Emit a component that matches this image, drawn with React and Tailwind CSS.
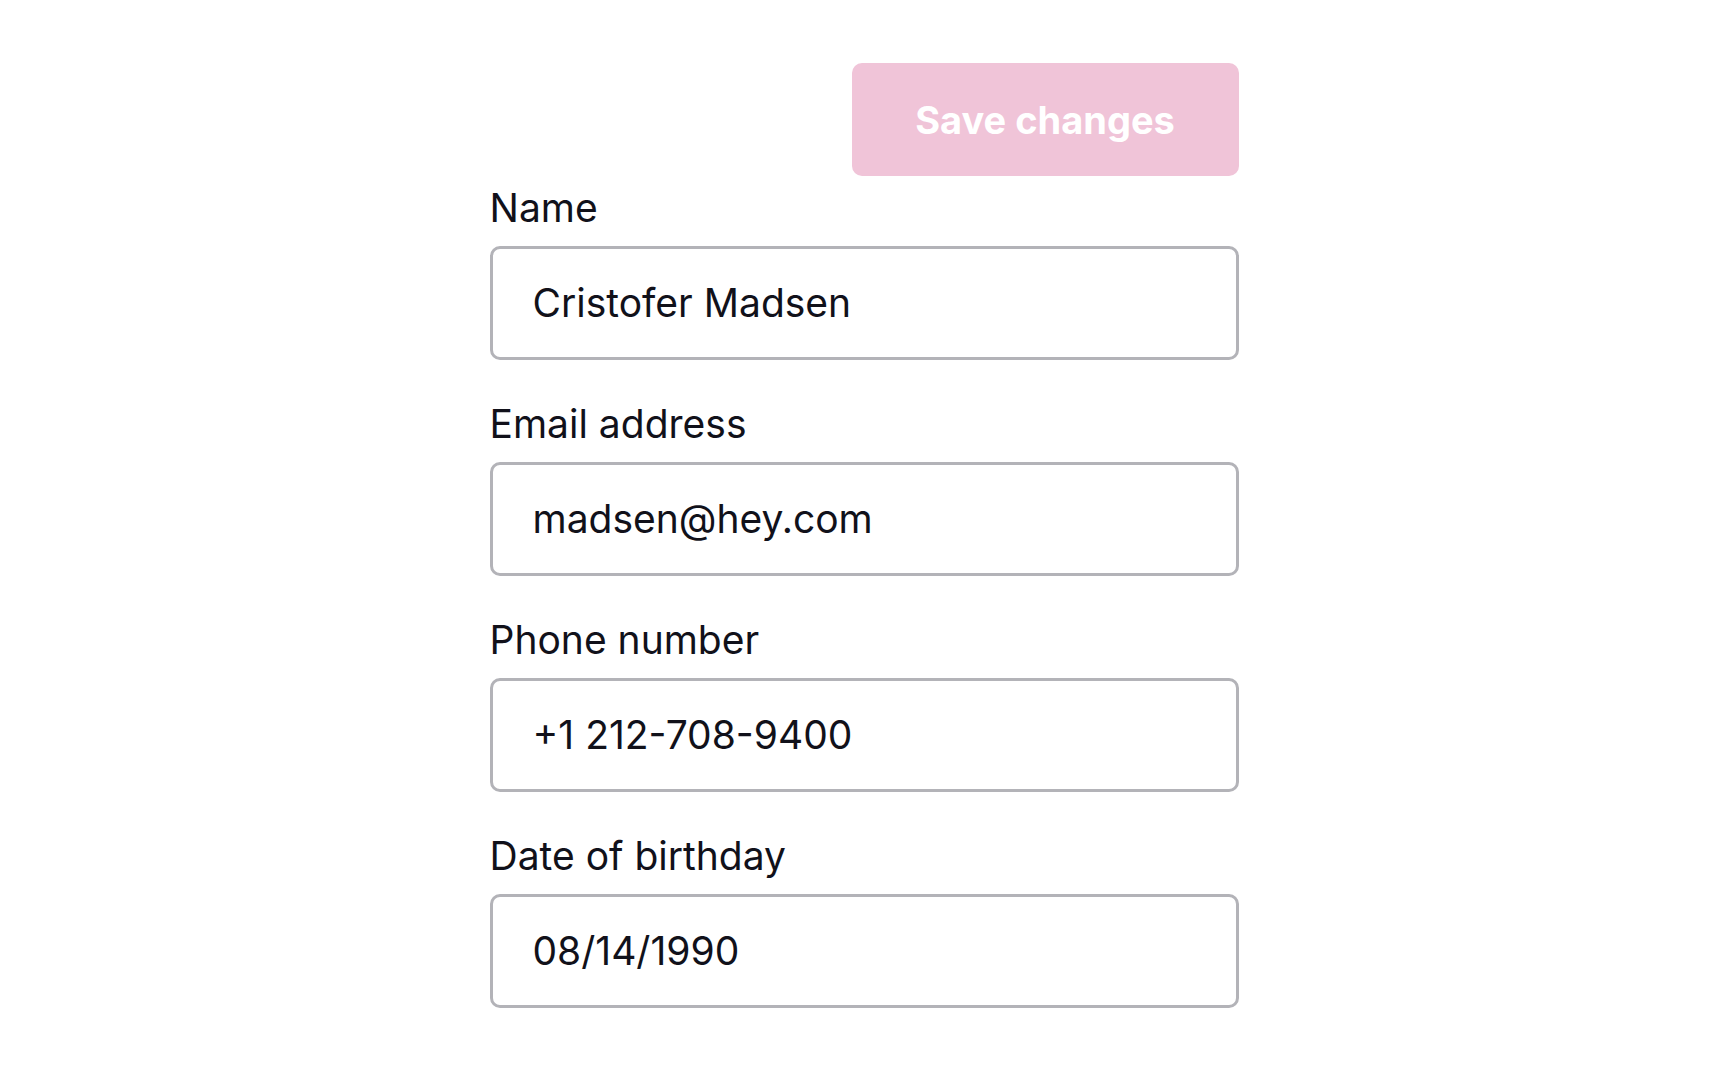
const fields = [
  { label: "Name", value: "Cristofer Madsen" },
  { label: "Email address", value: "madsen@hey.com" },
  { label: "Phone number", value: "+1 212-708-9400" },
  { label: "Date of birthday", value: "08/14/1990" },
];

function App() {
  return (
    <div className="min-h-screen bg-white font-['Inter',sans-serif] text-[#11111a]">
      <div className="w-[749px] mx-auto pt-[63px] flex flex-col">
        <button
          type="button"
          className="self-end w-[387px] h-[113px] pt-[2px] rounded-[10px] bg-[#f0c4d8] text-white text-[38px] font-bold"
        >
          Save changes
        </button>

        {fields.map((field, i) => (
          <div key={field.label} className={i === 0 ? "mt-[8px]" : "mt-[40px]"}>
            <label className="block text-[39px] leading-[48px]">
              {field.label}
            </label>
            <div className="mt-[14px] h-[114px] flex items-center px-[40px] rounded-[10px] border-[3px] border-[#b3b3b8] text-[39px]">
              {field.value}
            </div>
          </div>
        ))}
      </div>
    </div>
  );
}

export default App;
